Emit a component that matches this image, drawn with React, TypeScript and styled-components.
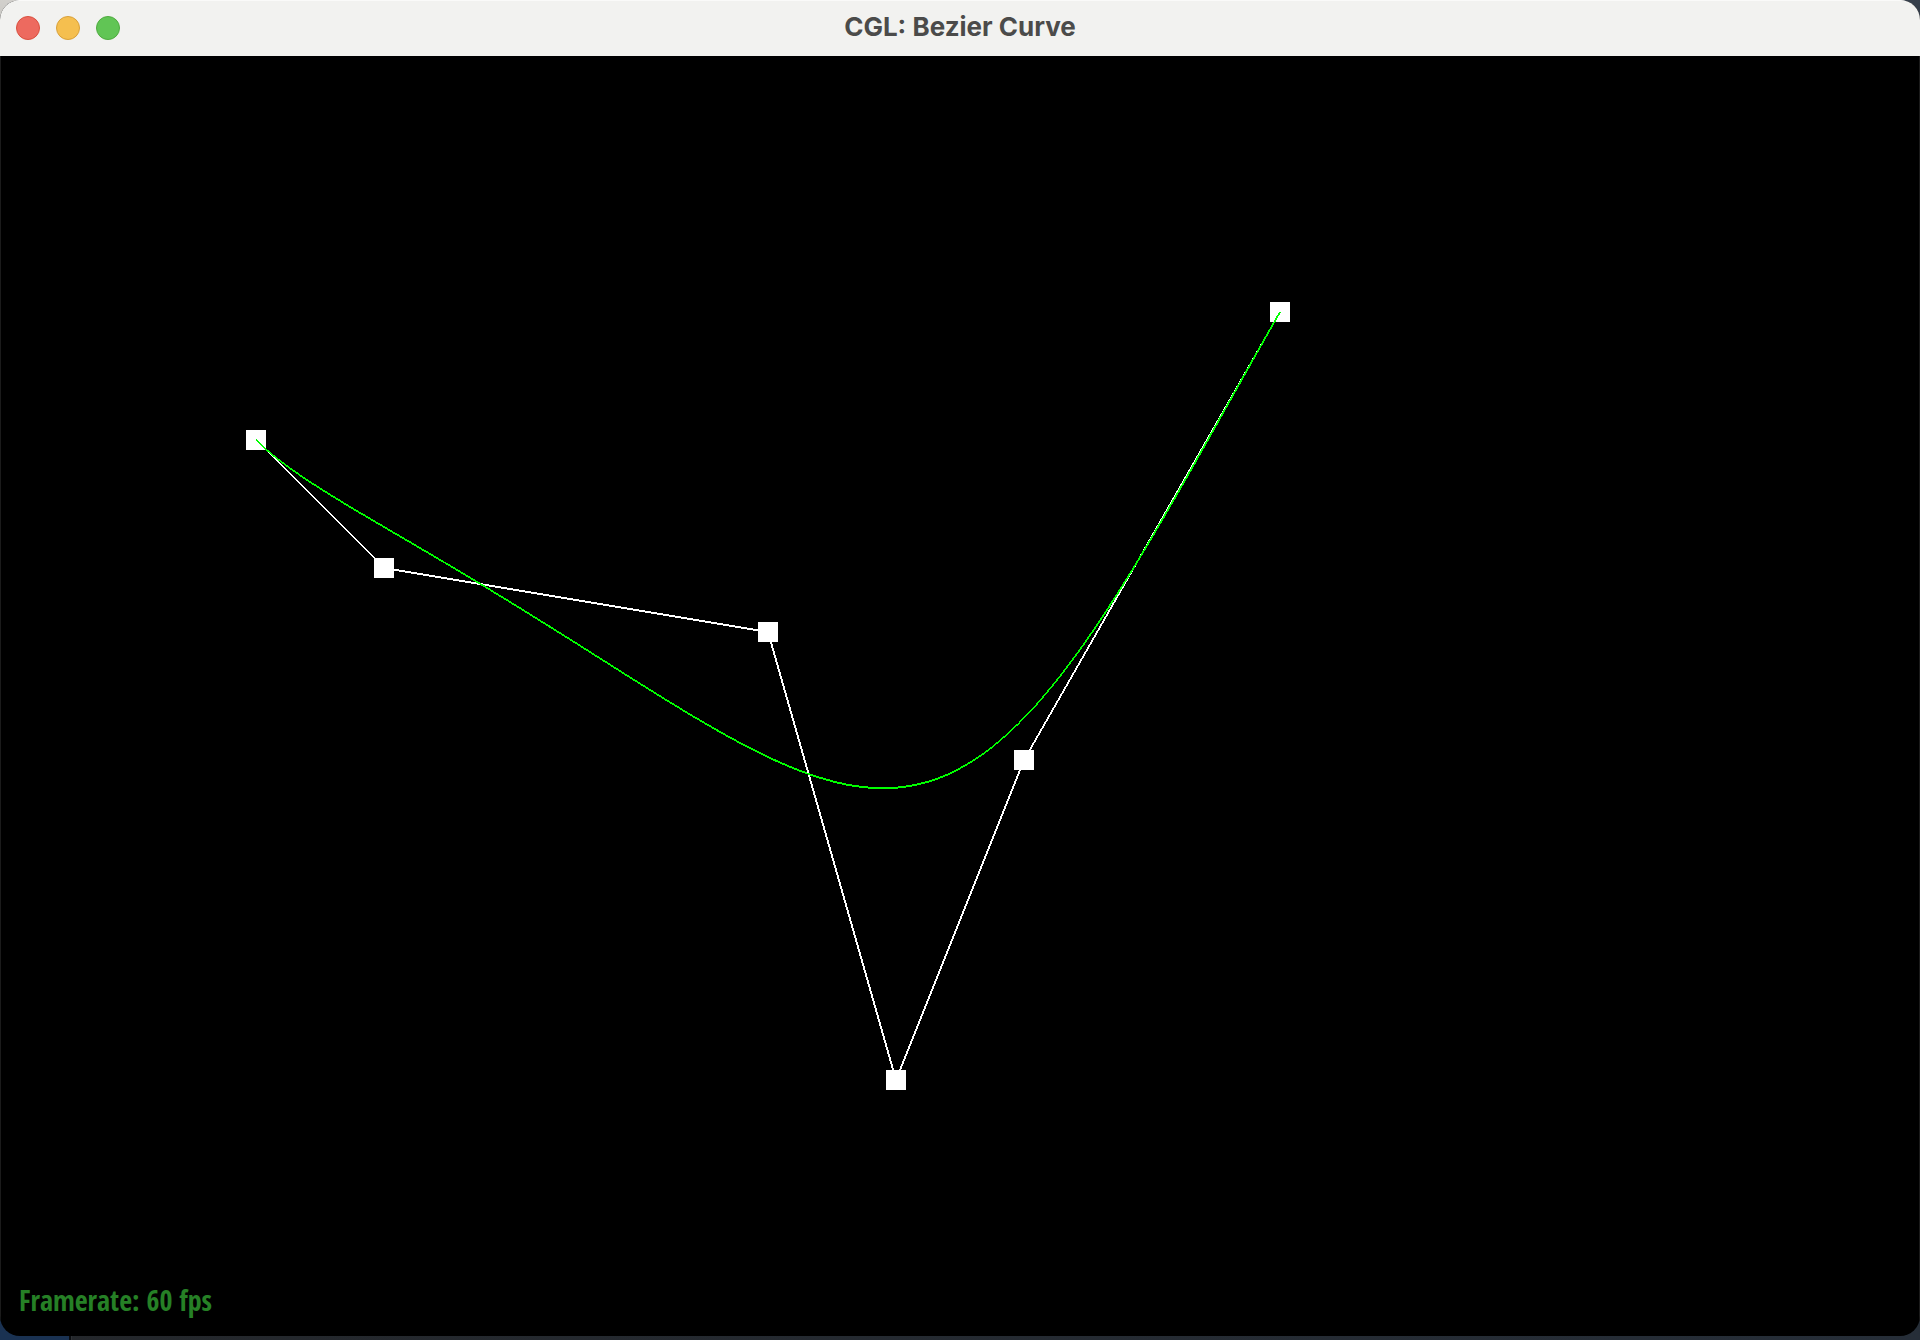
import React from "react";
import styled, { createGlobalStyle } from "styled-components";

type Point = [number, number];

const GlobalStyle = createGlobalStyle`
  body {
    margin: 0;
    background: #22272f;
  }
`;

const Desktop = styled.div`
  box-sizing: border-box;
  display: flex;
  min-height: 100vh;
  padding-bottom: 4px;
  background:
    linear-gradient(#d2d0cc, #b9b8b5) left top / 50% 60px no-repeat,
    linear-gradient(#37404c, #2b323c) right top / 50% 60px no-repeat,
    linear-gradient(90deg, #1a3252 0 69px, #0b0d10 69px 71px, #2f3236 71px 72px, transparent 72px) left bottom / 100% 30px no-repeat,
    linear-gradient(90deg, #24272b, #262e38);
`;

const Window = styled.main`
  display: flex;
  flex: 1;
  flex-direction: column;
  min-width: 0;
  overflow: hidden;
  border-radius: 20px;
  background: #000;
`;

const TitleBar = styled.header`
  display: grid;
  grid-template-columns: 1fr auto 1fr;
  align-items: center;
  box-sizing: border-box;
  height: 56px;
  padding: 0 16px;
  background: #f2f2f0;
  box-shadow: inset 0 1px 0 #fafaf9;
`;

const WindowControls = styled.div`
  display: flex;
  gap: 16px;
`;

const ControlButton = styled.button<{ $fill: string; $edge: string }>`
  box-sizing: border-box;
  width: 24px;
  height: 24px;
  padding: 0;
  border: 1px solid ${(p) => p.$edge};
  border-radius: 50%;
  background: ${(p) => p.$fill};
`;

const Title = styled.h1`
  margin: 0;
  padding-bottom: 2px;
  color: #4b4b4a;
  font: 700 26px/32px Inter, "Liberation Sans", sans-serif;
`;

const Viewport = styled.section`
  position: relative;
  flex: 1;
  box-shadow: inset 1px 0 0 #1b1b1b, inset -1px 0 0 #1b1b1b;
`;

const Scene = styled.svg`
  display: block;
  width: 100%;
  height: auto;
`;

const Framerate = styled.output`
  position: absolute;
  bottom: 18px;
  left: 19px;
  color: #268026;
  font: 700 28px/36px "Open Sans Condensed", "Liberation Sans Narrow", "Open Sans", sans-serif;
`;

const CONTROLS = [
  { label: "Close", fill: "#ed6a5f", edge: "#d9503f" },
  { label: "Minimize", fill: "#f5bf4f", edge: "#d8a03a" },
  { label: "Zoom", fill: "#61c555", edge: "#4fab3f" },
];

const HANDLES: Point[] = [
  [256, 384],
  [384, 512],
  [768, 576],
  [896, 1024],
  [1024, 704],
  [1280, 256],
];

const HANDLE_SIZE = 20;
const LINE_WIDTH = 2;
const STEPS = 100;

// De Casteljau evaluation for a control polygon of any degree.
function evaluate(points: Point[], t: number): Point {
  if (points.length === 1) return points[0];
  const next = points
    .slice(1)
    .map(([x, y], i): Point => [
      points[i][0] + (x - points[i][0]) * t,
      points[i][1] + (y - points[i][1]) * t,
    ]);
  return evaluate(next, t);
}

const curve = Array.from({ length: STEPS + 1 }, (_, i) => evaluate(HANDLES, i / STEPS));

// Aliased line strip: the line width is measured along the minor axis of each
// segment, so diagonals come out thinner than horizontals and verticals.
function LineStrip({ points, color }: { points: Point[]; color: string }) {
  return (
    <g stroke={color}>
      {points.slice(1).map(([x2, y2], i) => {
        const [x1, y1] = points[i];
        const dx = Math.abs(x2 - x1);
        const dy = Math.abs(y2 - y1);
        const width = (LINE_WIDTH * Math.max(dx, dy)) / Math.hypot(dx, dy);
        return <line key={i} x1={x1} y1={y1} x2={x2} y2={y2} strokeWidth={width} />;
      })}
    </g>
  );
}

export default function App() {
  return (
    <>
      <GlobalStyle />
      <Desktop>
        <Window>
          <TitleBar>
            <WindowControls>
              {CONTROLS.map((c) => (
                <ControlButton key={c.label} type="button" aria-label={c.label} $fill={c.fill} $edge={c.edge} />
              ))}
            </WindowControls>
            <Title>CGL: Bezier Curve</Title>
          </TitleBar>
          <Viewport>
            <Scene viewBox="0 0 1920 1280" shapeRendering="crispEdges" role="img" aria-label="Bezier curve with its control polygon">
              <LineStrip points={HANDLES} color="#fff" />
              {HANDLES.map(([x, y]) => (
                <rect
                  key={`${x}-${y}`}
                  x={x - HANDLE_SIZE / 2}
                  y={y - HANDLE_SIZE / 2}
                  width={HANDLE_SIZE}
                  height={HANDLE_SIZE}
                  fill="#fff"
                />
              ))}
              <LineStrip points={curve} color="#0f0" />
            </Scene>
            <Framerate>Framerate: 60 fps</Framerate>
          </Viewport>
        </Window>
      </Desktop>
    </>
  );
}
